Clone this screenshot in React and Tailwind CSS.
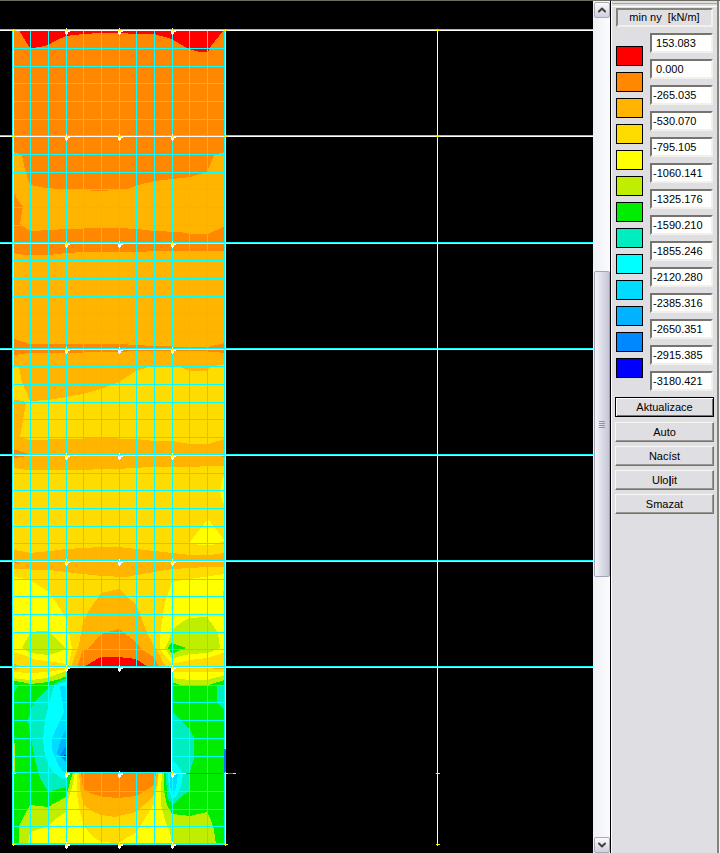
import { useState } from 'react';
import { ChevronUp, ChevronDown } from 'lucide-react';

const C = {
  red: '#ff0000',
  orange: '#ff8800',
  amber: '#ffb400',
  gold: '#ffdc00',
  yellow: '#ffff00',
  lime: '#bfee00',
  green: '#00ec00',
  teal: '#00edc0',
  cyan: '#00ffff',
  sky: '#00dcff',
  azure: '#00b2ff',
  blue: '#0088ff',
  navy: '#0000ff',
};

const SWATCHES = [
  'bg-[#ff0000]',
  'bg-[#ff8800]',
  'bg-[#ffb400]',
  'bg-[#ffdc00]',
  'bg-[#ffff00]',
  'bg-[#bfee00]',
  'bg-[#00ec00]',
  'bg-[#00edc0]',
  'bg-[#00ffff]',
  'bg-[#00dcff]',
  'bg-[#00b2ff]',
  'bg-[#0088ff]',
  'bg-[#0000ff]',
];

const LEVELS = [
  ' 153.083',
  ' 0.000',
  '-265.035',
  '-530.070',
  '-795.105',
  '-1060.141',
  '-1325.176',
  '-1590.210',
  '-1855.246',
  '-2120.280',
  '-2385.316',
  '-2650.351',
  '-2915.385',
  '-3180.421',
];

// contour bands, painted back to front
const BANDS = [
  [C.orange, '13,30 225,30 225,366 13,366'],
  [C.red, '19,30 22,35 25,40 29,47 31,48 40,47 48,45 57,40 66,36 83,34 101,33 119,33 136,34 154,34 165,37 172,39 180,44 189,49 200,52 208,52 211,46 223,31 223,30'],
  [C.amber, '13,152 22,155 24,165 28,180 31,185 45,188 60,189 101,191 128,189 138,185 155,181 172,179 190,177 207,172 212,160 214,155 225,152 225,226 208,234 190,234 180,232 154,231 136,229 119,228 100,228 66,229 50,230 31,231 22,226 20,224 22,212 23,207 18,200 13,192'],
  [C.amber, '13,253 25,255 48,255 66,253 83,252 119,252 172,251 225,251 225,343 208,347 189,347 154,346 119,344 30,344 20,341 13,338'],
  [C.amber, '13,355 22,354 30,353 66,353 100,352 154,351 200,351 215,352 225,353 225,470 13,470'],
  // storey below the fourth floor line
  [C.gold, '13,367 19,367 22,382 27,393 30,401 48,400 66,397 83,394 101,389 119,382 136,371 148,367 172,366 180,367 190,371 207,371 210,367 225,364 225,439 218,441 208,444 190,444 172,441 154,441 136,439 100,438 66,439 30,440 20,437 23,420 26,402 13,399'],
  [C.orange, '13,449 20,451 28,454 28,456 20,457 13,459'],
  [C.orange, '225,455 218,456 225,457'],
  [C.gold, '13,468 28,470 66,470 119,469 130,468 154,467 189,467 210,466 225,466 225,668 13,668'],
  [C.yellow, '225,474 222,480 220,492 222,500 225,506'],
  [C.yellow, '208,519 189,543 200,545 212,545 225,541'],
  [C.amber, '13,549 20,551 30,553 40,552 50,551 66,549 83,548 101,547 119,547 136,549 154,551 172,553 190,555 210,555 225,553 225,567 208,567 172,569 154,572 136,575 126,577 101,576 83,574 66,572 48,570 13,569'],
  [C.orange, '14,562 19,562 19,563 14,563'],
  // around the head of the opening
  [C.yellow, '13,576 20,578 30,580 38,585 48,591 57,604 66,618 69,632 72,649 68,667 66,664 48,661 36,660 24,655 13,652'],
  [C.lime, '22,648 30,633 38,631 48,631 50,633 66,649 56,653 48,655 30,653'],
  [C.amber, '71,667 79,645 83,622 88,612 101,593 110,591 119,589 128,598 136,604 142,620 148,635 156,649 162,660 166,667'],
  [C.orange, '77,667 83,650 89,648 101,634 119,629 128,636 136,642 142,650 154,657 159,667'],
  [C.red, '84,667 92,662 101,657 119,657 136,659 148,667'],
  [C.yellow, '172,582 189,579 225,574 225,652 207,658 190,660 172,664 166,657 160,649 160,635 165,602'],
  [C.lime, '165,648 169,640 172,630 178,625 189,618 207,617 212,624 218,633 220,648 208,653 190,654 180,656 172,659'],
  [C.lime, '223,591 225,591 225,600 223,600'],
  [C.green, '168,648 171,643 178,645 186,648 178,651 172,654'],
  [C.amber, '13,663 22,667 13,667'],
  // left pier
  [C.gold, '13,667 67,667 67,680 13,680'],
  [C.amber, '13,667 22,667 13,671'],
  [C.yellow, '13,672 30,673 48,672 60,670 67,669 67,690 13,690'],
  [C.lime, '13,678 20,679 30,680 40,679 50,677 60,673 67,671 67,690 13,690'],
  [C.green, '13,681 22,682 30,684 40,683 48,682 60,679 67,676 67,775 13,775'],
  // right pier
  [C.gold, '171,667 225,667 225,680 171,680'],
  [C.amber, '213,667 225,667 225,669 213,669'],
  [C.yellow, '171,672 225,672 225,690 171,690'],
  [C.lime, '171,678 189,680 207,680 225,675 225,690 171,690'],
  [C.green, '171,682 180,685 208,685 225,680 225,775 171,775'],
  // below the opening
  [C.green, '13,773 225,773 225,844 13,844'],
  [C.lime, '19,844 19,826 26,812 30,805 48,807 57,802 66,797 70,782 73,773 164,773 164,790 167,805 172,814 190,816 207,812 211,820 214,830 216,844'],
  [C.yellow, '28,844 30,832 48,826 57,818 66,812 68,800 72,788 75,773 162,773 161,790 161,805 165,820 170,832 172,844'],
  [C.gold, '77,773 77,795 80,812 84,826 92,836 101,842 119,843 128,837 137,832 145,818 154,804 157,790 159,773'],
  [C.amber, '79,773 81,795 84,805 92,811 101,815 115,817 136,812 145,804 153,797 157,785 158,773'],
  [C.orange, '81,773 83,789 92,794 104,797 119,798 136,796 145,791 154,785 156,773'],
  [C.teal, '67,678 56,683 48,688 33,703 28,720 31,738 35,760 40,778 48,792 57,789 67,787'],
  [C.cyan, '67,681 54,686 50,700 45,720 43,740 45,756 52,771 60,777 67,780'],
  [C.sky, '67,686 60,686 62,700 64,712 58,725 52,738 52,750 57,762 62,771 67,773'],
  [C.azure, '67,728 61,739 57,753 67,764'],
  [C.blue, '67,744 60,756 67,762'],
  [C.navy, '64,755 66,755 66,757 64,757'],
  [C.teal, '13,686 18,686 13,694'],
  [C.lime, '13,736 15,745 15,770 13,778'],
  [C.teal, '171,711 180,719 189,729 194,737 194,758 189,775 189,791 180,798 172,805 167,796 166,773 171,773'],
  [C.cyan, '171,760 176,763 183,774 181,786 176,797 172,799 169,790 168,773'],
  [C.sky, '170,773 178,773 176,788 173,795 170,788'],
  [C.teal, '217,686 217,703 225,711 225,686'],
];

const STOREYS = [30, 136, 243, 349, 455, 561, 667];
const MESH_X = [30, 48, 66, 83, 101, 119, 136, 154, 172, 189, 207];
const MESH_Y = [
  48, 66, 83, 101, 119,
  154, 172, 189, 207, 225,
  260, 278, 296, 313, 331,
  366, 384, 402, 419, 437,
  473, 490, 508, 526, 543,
  579, 596, 614, 632, 649,
  685, 702, 720, 738, 756,
  791, 809, 826,
];

const Support = ({ x, y }) => (
  <g transform={`translate(${x} ${y})`}>
    <path d="M0-2h1v2h3v2h-2v2h-1v1h-1v-1h-1v-4h1z" fill="#fff" />
    <path d="M-1 0h3v1h-1v1h-1v-1h-1zM0-1h1v1h-1z" fill="#ffff00" />
  </g>
);

const Tick = ({ x, y }) => (
  <path d={`M${x - 1} ${y}h4v1h-4zM${x} ${y - 1}h1v3h-1z`} fill="#ffff00" />
);

const ContourPlot = () => (
  <svg
    className="block h-full w-full"
    viewBox="0 0 593 853"
    preserveAspectRatio="xMinYMin slice"
    shapeRendering="crispEdges"
    role="img"
    aria-label="min ny"
  >
    <rect width="593" height="853" fill="#000" />
    <rect width="593" height="1" fill="#6e6c60" />

    {BANDS.map(([fill, points], i) => (
      <polygon key={i} points={points} fill={fill} />
    ))}

    {/* finite element mesh */}
    {MESH_X.map((x) => (
      <rect key={x} x={x} y="31" width="1" height="813" fill="#00ffff" />
    ))}
    {MESH_Y.map((y) => (
      <rect key={y} x="13" y={y} width="212" height="1" fill="#00ffff" />
    ))}

    {/* opening */}
    <rect x="67" y="668" width="105" height="105" fill="#000" />
    <rect x="66" y="668" width="1" height="105" fill="#00ffff" />
    <rect x="171" y="668" width="1" height="105" fill="#fff" />
    <rect x="172" y="668" width="1" height="105" fill="#00ffff" />

    {/* outer walls */}
    <rect x="12" y="30" width="1" height="815" fill="#00ffff" />
    <rect x="13" y="30" width="1" height="814" fill="#fff" />
    <rect x="224" y="30" width="1" height="815" fill="#00ffff" />
    <rect x="225" y="30" width="1" height="814" fill="#fff" />

    {/* floor lines */}
    {STOREYS.map((y) => (
      <g key={y}>
        <rect x="0" y={y - 1} width="593" height="1" fill="#00ffff" />
        <rect x="0" y={y} width="593" height="1" fill="#fff" />
      </g>
    ))}
    <rect x="13" y="772" width="160" height="1" fill="#00ffff" />
    <rect x="12" y="843" width="214" height="2" fill="#00ffff" />
    <rect x="172" y="773" width="14" height="1" fill="#fff" />
    <rect x="186" y="773" width="37" height="1" fill="#e04020" />
    <rect x="224" y="749" width="2" height="24" fill="#0078ff" />
    <rect x="226" y="773" width="7" height="1" fill="#e04020" />
    <rect x="233" y="773" width="3" height="1" fill="#ffff00" />

    <rect x="437" y="30" width="1" height="815" fill="#fff" />

    {[...STOREYS, 773, 844].map((y) => (
      <g key={y}>
        <Support x={66} y={y} />
        <Support x={119} y={y} />
        <Support x={172} y={y} />
        <Tick x={13} y={y} />
        <Tick x={225} y={y} />
      </g>
    ))}
    {[30, 136, 773, 844].map((y) => (
      <Tick key={y} x={437} y={y} />
    ))}
  </svg>
);

const arrowClass =
  'flex h-4 w-4 shrink-0 items-center justify-center rounded-xs border border-[#a9a9b8] bg-linear-to-b from-[#fbfbfd] to-[#cfcfdf] text-[#404040]';

const ScrollBar = () => (
  <div className="flex w-[17px] shrink-0 flex-col items-center border-t border-[#6e6c60] bg-linear-to-r from-[#eef0f5] to-[#fcfcff] pt-px">
    <button type="button" aria-label="Scroll up" className={arrowClass}>
      <ChevronUp size={12} strokeWidth={4} />
    </button>
    <div className="grow-[254] basis-0" />
    <div className="flex w-4 grow-[305] basis-0 flex-col items-center justify-center gap-px rounded-xs border border-[#a3a3b5] bg-linear-to-r from-[#f4f4f9] via-[#dcdce8] to-[#c6c6d8]">
      <span className="h-px w-1.5 bg-[#8f93a5]" />
      <span className="h-px w-1.5 bg-[#8f93a5]" />
      <span className="h-px w-1.5 bg-[#8f93a5]" />
      <span className="h-px w-1.5 bg-[#8f93a5]" />
    </div>
    <div className="grow-[261] basis-0" />
    <button type="button" aria-label="Scroll down" className={arrowClass}>
      <ChevronDown size={12} strokeWidth={4} />
    </button>
  </div>
);

const PanelButton = ({ children, primary }) => (
  <button
    type="button"
    className={`h-5 border text-center leading-4 ${
      primary
        ? 'border-black shadow-[inset_1px_1px_0_#fff,inset_-1px_-1px_0_#77756b]'
        : 'border-t-[#f8f8f4] border-l-[#f8f8f4] border-r-[#77756b] border-b-[#77756b] shadow-[inset_-1px_-1px_0_#96958e]'
    }`}
  >
    {children}
  </button>
);

const LegendPanel = () => {
  const [levels, setLevels] = useState(LEVELS);

  const setLevel = (index, value) => {
    setLevels((prev) => prev.map((v, i) => (i === index ? value : v)));
  };

  return (
    <aside className="flex w-[110px] shrink-0 border-t border-l border-t-[#6e6c60] border-l-black bg-[#dfdee3]">
      <div className="flex min-w-0 flex-1 flex-col border-l border-white pt-0.5">
        <div className="h-1 border-t border-b border-t-[#a5a4aa] border-b-white" />
        <div className="flex flex-col px-1">
          <h1 className="mt-px h-[19px] whitespace-pre border-2 border-t-[#858479] border-l-[#858479] border-r-[#f1f1ea] border-b-[#f1f1ea] text-center leading-[15px]">
            {'min ny  [kN/m]'}
          </h1>

          <div className="mt-1.5 flex justify-between">
            <div className="flex flex-col gap-1.5 pt-[13px]">
              {SWATCHES.map((bg) => (
                <span key={bg} className={`h-5 w-[27px] border border-black ${bg}`} />
              ))}
            </div>
            <div className="flex w-[63px] flex-col gap-1.5">
              {levels.map((value, i) => (
                <input
                  key={i}
                  type="text"
                  aria-label={`Level ${i + 1}`}
                  value={value}
                  onChange={(e) => setLevel(i, e.target.value)}
                  className="h-5 w-full border-2 border-t-[#77756b] border-l-[#77756b] border-r-[#f1f1ea] border-b-[#f1f1ea] bg-white pl-px"
                />
              ))}
            </div>
          </div>
        </div>

        <div className="mt-1.5 flex flex-col gap-[5px] px-[3px]">
          <PanelButton primary>Aktualizace</PanelButton>
          <div className="flex flex-col gap-1">
            <PanelButton>Auto</PanelButton>
            <PanelButton>Nacíst</PanelButton>
            <PanelButton>Ulo<b>|</b>it</PanelButton>
            <PanelButton>Smazat</PanelButton>
          </div>
        </div>
      </div>
      <div className="w-0.5 bg-[#85847c]" />
      <div className="w-px bg-[#f3f2ea]" />
    </aside>
  );
};

const App = () => (
  <div className="flex h-screen overflow-hidden bg-black font-['Liberation_Sans',sans-serif] text-[11px] text-black">
    <main className="min-w-0 flex-1">
      <ContourPlot />
    </main>
    <ScrollBar />
    <LegendPanel />
  </div>
);

export default App;
